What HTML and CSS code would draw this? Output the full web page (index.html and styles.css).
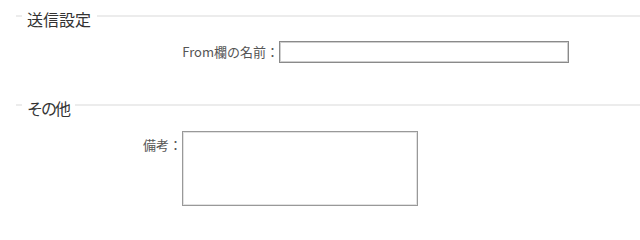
FILE: index.html
```html
<!DOCTYPE html>
<html lang="ja">
<head>
<meta charset="utf-8">
<title>設定</title>
<link rel="stylesheet" href="styles.css">
</head>
<body>
<div class="page">
  <section class="group group-send">
    <div class="group-head">
      <span class="rule rule-lead"></span>
      <h2 class="group-title">送信設定</h2>
      <span class="rule rule-tail"></span>
    </div>
    <div class="field-row row-from">
      <label class="field-label label-from" for="from-name">From欄の名前：</label>
      <input class="text-input" id="from-name" type="text">
    </div>
  </section>
  <section class="group group-other">
    <div class="group-head">
      <span class="rule rule-lead"></span>
      <h2 class="group-title title-narrow">その他</h2>
      <span class="rule rule-tail"></span>
    </div>
    <div class="field-row row-note">
      <label class="field-label label-note" for="note">備考：</label>
      <textarea class="text-area" id="note"></textarea>
    </div>
  </section>
</div>
</body>
</html>
```

FILE: styles.css
```css
html, body {
  margin: 0;
  padding: 0;
  background: #fff;
}

body {
  font-family: "Noto Sans CJK JP", "Noto Sans", sans-serif;
  color: #444;
}

.page {
  padding-top: 7px;
}

.group-head {
  display: flex;
  align-items: flex-start;
  padding-left: 16px;
  height: 24px;
}

.rule {
  display: block;
  height: 0;
  border-top: 2px solid #ececec;
  margin-top: 8px;
}

.rule-lead {
  width: 6px;
  margin-right: 5px;
}

.rule-tail {
  flex: 1;
  margin-left: 6px;
}

.group-title {
  margin: 0;
  font-size: 16px;
  line-height: 24px;
  font-weight: normal;
  color: #333;
}

.title-narrow {
  letter-spacing: -2px;
}

.field-row {
  display: flex;
}

.row-from {
  margin-top: 10px;
  align-items: center;
  padding-left: 150px;
}

.row-note {
  margin-top: 11px;
  align-items: flex-start;
  padding-left: 100px;
}

.field-label {
  font-size: 13px;
  line-height: 18px;
  color: #555;
  text-align: right;
  white-space: nowrap;
}

.label-from {
  width: 129px;
}

.label-note {
  width: 82px;
  padding-top: 5px;
}

.text-input {
  box-sizing: border-box;
  width: 290px;
  height: 22px;
  margin: 0;
  padding: 0 3px;
  border: 1px solid #8a8a8a;
  box-shadow: inset 0 0 0 1px #cfcfcf;
  background: #fff;
  font: 13px "Noto Sans CJK JP", sans-serif;
  outline: none;
}

.text-area {
  box-sizing: border-box;
  width: 236px;
  height: 75px;
  margin: 0;
  padding: 2px;
  border: 1px solid #999;
  box-shadow: inset 0 0 0 1px #e2e2e2;
  background: #fff;
  resize: none;
  font: 13px "Noto Sans CJK JP", sans-serif;
  outline: none;
}

.group-other {
  margin-top: 33px;
}
```
